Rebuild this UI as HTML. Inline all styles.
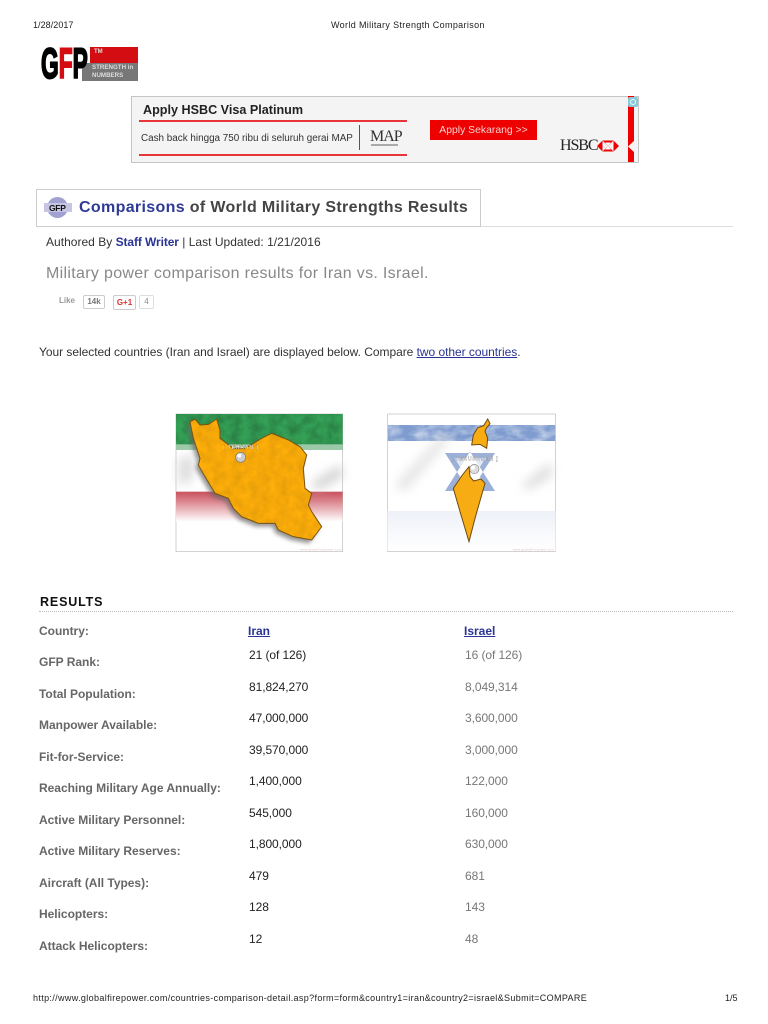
<!DOCTYPE html>
<html><head><meta charset="utf-8"><title>World Military Strength Comparison</title>
<style>
html,body{margin:0;padding:0;background:#fff}
#p{position:relative;width:768px;height:1024px;overflow:hidden;font-family:"Liberation Sans",sans-serif;filter:blur(.35px)}
#p div,#p a{position:absolute;white-space:nowrap}
a{color:#2b3494}
.h{font-size:9px;color:#222;line-height:12px}
.l{left:39px;font-size:12px;font-weight:bold;color:#666;line-height:14px;letter-spacing:-.02px}
.v{left:249px;font-size:12px;color:#222;line-height:14px;letter-spacing:-.08px}
.w{left:465px;font-size:12px;color:#777;line-height:14px;letter-spacing:-.08px}
</style></head><body><div id="p">
<div class="h" style="left:33px;top:19px;letter-spacing:.05px">1/28/2017</div>
<div class="h" style="left:331px;top:19px;letter-spacing:.35px">World Military Strength Comparison</div>

<!-- logo -->
<div style="left:90px;top:47px;width:48px;height:16px;background:#d40d12"></div>
<div style="left:82px;top:63px;width:56px;height:18px;background:#777"></div>
<div style="left:94px;top:48px;font-size:6px;font-weight:bold;color:#ddd;line-height:8px">TM</div>
<div style="left:92px;top:64px;font-size:6.2px;font-weight:bold;color:#ddd;line-height:8px">STRENGTH in</div>
<div style="left:92px;top:72px;font-size:6.2px;font-weight:bold;color:#ddd;line-height:8px">NUMBERS</div>
<div style="left:41px;top:39px;font-size:43px;font-weight:bold;line-height:50px;color:#000;transform:scaleX(.53);transform-origin:0 0;-webkit-text-stroke:2px #000">G<span style="color:#d40d12;-webkit-text-stroke-color:#d40d12">F</span>P</div>

<!-- ad -->
<div style="left:131px;top:96px;width:506px;height:65px;background:#f4f4f4;border:1px solid #c4c4c4"></div>
<div style="left:143px;top:102px;font-size:12.6px;font-weight:bold;color:#222;line-height:16px">Apply HSBC Visa Platinum</div>
<div style="left:139px;top:120px;width:268px;height:2px;background:#e8353a"></div>
<div style="left:139px;top:154px;width:268px;height:2px;background:#e8353a"></div>
<div style="left:141px;top:132px;font-size:9.9px;color:#333;line-height:13px">Cash back hingga 750 ribu di seluruh gerai MAP</div>
<div style="left:359px;top:125px;width:1px;height:25px;background:#555"></div>
<div style="left:370px;top:129px;font-family:'Liberation Serif',serif;font-size:16px;color:#333;line-height:16px;letter-spacing:-1px">MAP</div>
<div style="left:371px;top:144px;width:27px;height:2px;background:#aaa"></div>
<div style="left:430px;top:120px;width:107px;height:20px;background:#ee0000;color:#fbd0d0;font-size:10.4px;line-height:21px;text-align:center">Apply Sekarang &gt;&gt;</div>
<div style="left:560px;top:137px;font-family:'Liberation Serif',serif;font-size:16px;color:#222;line-height:18px;letter-spacing:-1.1px">HSBC</div>
<svg style="position:absolute;left:597px;top:139px" width="22" height="14" viewBox="0 0 22 14"><path d="M0 7 5.500 1.500V12.500ZM22 7 16.500 1.500V12.500ZM5.500 1.500H16.500L11 7ZM5.500 12.500H16.500L11 7Z" fill="#e00"/><path d="M8 3.500 11 7 14 3.500ZM8 10.500 11 7 14 10.500Z" fill="#fff"/></svg>
<div style="left:628px;top:96px;width:6px;height:66px;background:#ee0000"></div>
<svg style="position:absolute;left:627px;top:140px" width="8" height="13"><path d="M8 0V13L1 6.500Z" fill="#f4f4f4"/></svg>
<div style="left:628px;top:97px;width:10px;height:10px;background:#8cc8d8;border-radius:2px"></div>
<div style="left:630px;top:99px;width:4px;height:4px;border:1px solid #dff;border-radius:50%"></div>

<!-- heading -->
<div style="left:36px;top:226px;width:697px;height:1px;background:#ddd"></div>
<div style="left:36px;top:189px;width:443px;height:36px;border:1px solid #ccc;background:#fff"></div>
<div style="left:47px;top:197px;width:21px;height:21px;border-radius:50%;background:#a2a2d2"></div>
<div style="left:44px;top:203px;width:28px;height:9px;background:#c6c6e4"></div>
<div style="left:49px;top:202px;font-size:8.5px;font-weight:bold;line-height:12px;color:#111;letter-spacing:-.3px">GFP</div>
<div style="left:79px;top:198px;font-size:16px;font-weight:bold;line-height:20px;color:#444;letter-spacing:.34px"><span style="color:#2f3a96">Comparisons</span> of World Military Strengths Results</div>

<div style="left:46px;top:235px;font-size:12px;line-height:14px;color:#333;letter-spacing:.02px">Authored By <span style="font-weight:bold;color:#2b3494;letter-spacing:-.1px">Staff Writer</span> | Last Updated: 1/21/2016</div>
<div style="left:46px;top:264px;font-size:16px;line-height:19px;color:#888;letter-spacing:.32px">Military power comparison results for Iran vs. Israel.</div>

<!-- social -->
<div style="left:59px;top:296px;font-size:8px;font-weight:bold;line-height:10px;color:#999">Like</div>
<div style="left:83px;top:295px;width:20px;height:12px;border:1px solid #ccc;border-radius:2px;font-size:8px;font-weight:bold;line-height:12px;text-align:center;color:#777">14k</div>
<div style="left:113px;top:295px;width:21px;height:13px;border:1px solid #ccc;border-radius:2px;font-size:8px;font-weight:bold;line-height:13px;text-align:center;color:#d33">G+1</div>
<div style="left:139px;top:295px;width:13px;height:12px;border:1px solid #ddd;border-radius:2px;font-size:8px;line-height:12px;text-align:center;color:#888">4</div>

<div style="left:39px;top:345px;font-size:12px;line-height:14px;color:#333;letter-spacing:-.04px">Your selected countries (Iran and Israel) are displayed below. Compare <a style="position:static" href="#">two other countries</a>.</div>

<!-- Iran map -->
<svg style="position:absolute;left:165px;top:405px" width="200" height="155" viewBox="0 0 600 465">
<defs>
<linearGradient id="r" x1="0" y1="0" x2="0" y2="1"><stop offset="0" stop-color="#c94f5c"/><stop offset=".35" stop-color="#dc8a92"/><stop offset="1" stop-color="#fff"/></linearGradient>
<linearGradient id="b" x1="0" y1="0" x2="0" y2="1"><stop offset="0" stop-color="#eef1f8"/><stop offset="1" stop-color="#fff"/></linearGradient>
<filter id="s" x="-20%" y="-20%" width="140%" height="140%"><feGaussianBlur stdDeviation="6"/></filter>
<filter id="s2" x="-50%" y="-100%" width="200%" height="300%"><feGaussianBlur stdDeviation="16"/></filter>
<filter id="tx" x="0" y="0" width="100%" height="100%"><feTurbulence type="fractalNoise" baseFrequency=".035" numOctaves="4" seed="4" result="n"/><feColorMatrix in="n" type="matrix" values="0 0 0 0 0 0 0 0 0 0 0 0 0 0 0 0 0 0 1.6 -.45"/><feComposite in2="SourceAlpha" operator="in"/></filter>
<filter id="txw" x="0" y="0" width="100%" height="100%"><feTurbulence type="fractalNoise" baseFrequency=".025 .05" numOctaves="3" seed="9" result="n"/><feColorMatrix in="n" type="matrix" values="0 0 0 0 1 0 0 0 0 1 0 0 0 0 1 0 0 0 2 -.7"/><feComposite in2="SourceAlpha" operator="in"/></filter>
<path id="irp" d="M75 50 90 42 105 60 130 58 155 42 165 75 165 100 205 130 240 130 290 100 320 85 370 105 405 125 425 150 415 190 420 250 440 265 430 300 440 320 470 365 440 405 385 395 340 375 330 355 280 355 230 335 205 310 190 280 150 265 120 215 100 180 105 160 85 100Z"/>
</defs>
<rect x="33" y="27" width="500" height="413" fill="#fff" stroke="#bbb" stroke-width="2"/>
<rect x="33" y="27" width="500" height="108" fill="#34a056"/>
<rect x="33" y="27" width="500" height="92" filter="url(#tx)" opacity=".22"/>
<rect x="33" y="118" width="500" height="17" fill="#9cc9a8"/>
<rect x="33" y="260" width="500" height="90" fill="url(#r)"/>
<path d="M440 235 530 180V215L455 255Z" fill="#ccc" filter="url(#s2)"/>
<path d="M40 160 90 150 80 230 40 240Z" fill="#ddd" filter="url(#s2)"/>
<use href="#irp" fill="#666" transform="translate(-8 10)" filter="url(#s)" opacity=".7"/>
<use href="#irp" fill="#fdae0a" stroke="#7a5410" stroke-width="3"/>
<use href="#irp" filter="url(#tx)" opacity=".1"/>
<text x="226" y="132" font-size="15" font-weight="bold" fill="#fff" stroke="#6a4a10" stroke-width=".4" text-anchor="middle" textLength="105" font-family="Liberation Sans,sans-serif">[ TEHRAN ]</text>
<circle cx="227" cy="157" r="15" fill="#ccc" stroke="#777" stroke-width="2"/><circle cx="223" cy="152" r="6" fill="#fff"/>
<text x="530" y="436" font-size="9" fill="#e3b8bc" text-anchor="end" font-family="Liberation Sans,sans-serif" letter-spacing="1">www.globalfirepower.com</text>
</svg>

<!-- Israel map -->
<svg style="position:absolute;left:375px;top:405px" width="200" height="155" viewBox="0 0 600 465">
<rect x="38" y="27" width="503" height="413" fill="#fff" stroke="#bbb" stroke-width="2"/>
<rect x="38" y="60" width="503" height="48" fill="#7f9ccf"/>
<rect x="38" y="60" width="503" height="48" filter="url(#txw)" opacity=".5"/>
<rect x="38" y="318" width="503" height="120" fill="url(#b)"/>
<path d="M60 240 200 90 225 100 90 260Z" fill="#e4e4e4" filter="url(#s2)"/>
<path d="M440 240 530 170V215L460 255Z" fill="#ddd" filter="url(#s2)"/>
<path d="M285 140 360 258H210Z M285 262 360 144H210Z" fill="#9cb0d8"/>
<path d="M285 168 331 242H239ZM285 234 331 160H239Z" fill="#fff" opacity=".7"/>
<path d="M338 42 345 56 335 68 330 78 338 100 335 130 315 118 290 120 295 90 308 68 326 62Z" fill="#f8ac14" stroke="#6b4a10" stroke-width="3"/>
<path d="M282 185 262 210 235 250 255 320 282 410 300 340 330 235 318 222 296 228 285 215Z" fill="#f8ac14" stroke="#6b4a10" stroke-width="3"/>
<text x="298" y="166" font-size="15" font-weight="bold" fill="#fff" stroke="#555" stroke-width=".5" text-anchor="middle" textLength="140" font-family="Liberation Sans,sans-serif">[ JERUSALEM ]</text>
<circle cx="298" cy="192" r="14" fill="#ddd" stroke="#888" stroke-width="2"/><circle cx="294" cy="188" r="6" fill="#fff"/>
<text x="538" y="436" font-size="9" fill="#e3b8bc" text-anchor="end" font-family="Liberation Sans,sans-serif" letter-spacing="1">www.globalfirepower.com</text>
</svg>

<!-- results -->
<div style="left:40px;top:595px;font-size:12.5px;font-weight:bold;line-height:15px;color:#111;letter-spacing:.85px">RESULTS</div>
<div style="left:39px;top:611px;width:694px;height:0;border-top:1px dotted #bbb"></div>

<div class="l" style="top:624px">Country:</div>
<a href="#" style="left:248px;top:624px;font-size:12px;font-weight:bold;line-height:14px">Iran</a>
<a href="#" style="left:464px;top:624px;font-size:12px;font-weight:bold;line-height:14px">Israel</a>

<div class="l" style="top:655px">GFP Rank:</div><div class="v" style="top:648px">21 (of 126)</div><div class="w" style="top:648px">16 (of 126)</div>
<div class="l" style="top:687px">Total Population:</div><div class="v" style="top:680px">81,824,270</div><div class="w" style="top:680px">8,049,314</div>
<div class="l" style="top:718px">Manpower Available:</div><div class="v" style="top:711px">47,000,000</div><div class="w" style="top:711px">3,600,000</div>
<div class="l" style="top:750px">Fit-for-Service:</div><div class="v" style="top:743px">39,570,000</div><div class="w" style="top:743px">3,000,000</div>
<div class="l" style="top:781px">Reaching Military Age Annually:</div><div class="v" style="top:774px">1,400,000</div><div class="w" style="top:774px">122,000</div>
<div class="l" style="top:813px">Active Military Personnel:</div><div class="v" style="top:806px">545,000</div><div class="w" style="top:806px">160,000</div>
<div class="l" style="top:844px">Active Military Reserves:</div><div class="v" style="top:837px">1,800,000</div><div class="w" style="top:837px">630,000</div>
<div class="l" style="top:876px">Aircraft (All Types):</div><div class="v" style="top:869px">479</div><div class="w" style="top:869px">681</div>
<div class="l" style="top:907px">Helicopters:</div><div class="v" style="top:900px">128</div><div class="w" style="top:900px">143</div>
<div class="l" style="top:939px">Attack Helicopters:</div><div class="v" style="top:932px">12</div><div class="w" style="top:932px">48</div>

<div class="h" style="left:33px;top:992px;letter-spacing:.355px">http://www.globalfirepower.com/countries-comparison-detail.asp?form=form&amp;country1=iran&amp;country2=israel&amp;Submit=COMPARE</div>
<div class="h" style="left:725px;top:992px">1/5</div>
</div></body></html>
